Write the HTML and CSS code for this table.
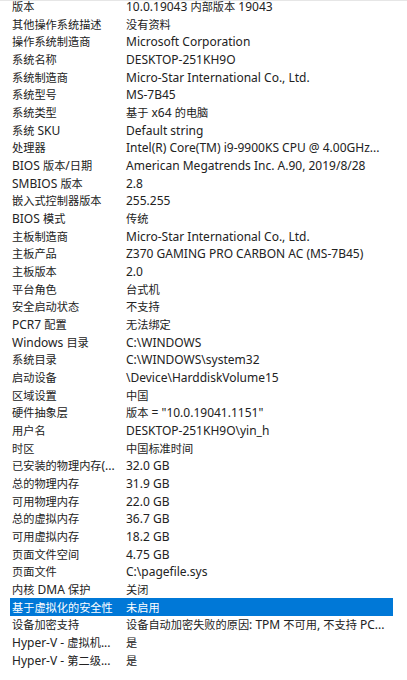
FILE: index.html
```html
<!DOCTYPE html>
<html lang="zh-CN">
<head>
<meta charset="utf-8">
<link rel="stylesheet" href="styles.css">
</head>
<body>
<div class="list">
  <div class="row"><span class="k"><span class="zh">版本</span></span><span class="v">10.0.19043 <span class="zh">内部版本</span> 19043</span></div>
  <div class="row"><span class="k"><span class="zh">其他操作系统描述</span></span><span class="v"><span class="zh">没有资料</span></span></div>
  <div class="row"><span class="k"><span class="zh">操作系统制造商</span></span><span class="v">Microsoft Corporation</span></div>
  <div class="row"><span class="k"><span class="zh">系统名称</span></span><span class="v">DESKTOP-251KH9O</span></div>
  <div class="row"><span class="k"><span class="zh">系统制造商</span></span><span class="v">Micro-Star International Co., Ltd.</span></div>
  <div class="row"><span class="k"><span class="zh">系统型号</span></span><span class="v">MS-7B45</span></div>
  <div class="row"><span class="k"><span class="zh">系统类型</span></span><span class="v"><span class="zh">基于</span> x64 <span class="zh">的电脑</span></span></div>
  <div class="row"><span class="k"><span class="zh">系统</span> SKU</span><span class="v">Default string</span></div>
  <div class="row"><span class="k"><span class="zh">处理器</span></span><span class="v">Intel(R) Core(TM) i9-9900KS CPU @ 4.00GHz...</span></div>
  <div class="row"><span class="k">BIOS <span class="zh">版本</span>/<span class="zh">日期</span></span><span class="v">American Megatrends Inc. A.90, 2019/8/28</span></div>
  <div class="row"><span class="k">SMBIOS <span class="zh">版本</span></span><span class="v">2.8</span></div>
  <div class="row"><span class="k"><span class="zh">嵌入式控制器版本</span></span><span class="v">255.255</span></div>
  <div class="row"><span class="k">BIOS <span class="zh">模式</span></span><span class="v"><span class="zh">传统</span></span></div>
  <div class="row"><span class="k"><span class="zh">主板制造商</span></span><span class="v">Micro-Star International Co., Ltd.</span></div>
  <div class="row"><span class="k"><span class="zh">主板产品</span></span><span class="v">Z370 GAMING PRO CARBON AC (MS-7B45)</span></div>
  <div class="row"><span class="k"><span class="zh">主板版本</span></span><span class="v">2.0</span></div>
  <div class="row"><span class="k"><span class="zh">平台角色</span></span><span class="v"><span class="zh">台式机</span></span></div>
  <div class="row"><span class="k"><span class="zh">安全启动状态</span></span><span class="v"><span class="zh">不支持</span></span></div>
  <div class="row"><span class="k">PCR7 <span class="zh">配置</span></span><span class="v"><span class="zh">无法绑定</span></span></div>
  <div class="row"><span class="k">Windows <span class="zh">目录</span></span><span class="v">C:\WINDOWS</span></div>
  <div class="row"><span class="k"><span class="zh">系统目录</span></span><span class="v">C:\WINDOWS\system32</span></div>
  <div class="row"><span class="k"><span class="zh">启动设备</span></span><span class="v">\Device\HarddiskVolume15</span></div>
  <div class="row"><span class="k"><span class="zh">区域设置</span></span><span class="v"><span class="zh">中国</span></span></div>
  <div class="row"><span class="k"><span class="zh">硬件抽象层</span></span><span class="v"><span class="zh">版本</span> = "10.0.19041.1151"</span></div>
  <div class="row"><span class="k"><span class="zh">用户名</span></span><span class="v">DESKTOP-251KH9O\yin_h</span></div>
  <div class="row"><span class="k"><span class="zh">时区</span></span><span class="v"><span class="zh">中国标准时间</span></span></div>
  <div class="row"><span class="k"><span class="zh">已安装的物理内存</span>(...</span><span class="v">32.0 GB</span></div>
  <div class="row"><span class="k"><span class="zh">总的物理内存</span></span><span class="v">31.9 GB</span></div>
  <div class="row"><span class="k"><span class="zh">可用物理内存</span></span><span class="v">22.0 GB</span></div>
  <div class="row"><span class="k"><span class="zh">总的虚拟内存</span></span><span class="v">36.7 GB</span></div>
  <div class="row"><span class="k"><span class="zh">可用虚拟内存</span></span><span class="v">18.2 GB</span></div>
  <div class="row"><span class="k"><span class="zh">页面文件空间</span></span><span class="v">4.75 GB</span></div>
  <div class="row"><span class="k"><span class="zh">页面文件</span></span><span class="v">C:\pagefile.sys</span></div>
  <div class="row"><span class="k"><span class="zh">内核</span> DMA <span class="zh">保护</span></span><span class="v"><span class="zh">关闭</span></span></div>
  <div class="row selected"><span class="k"><span class="zh">基于虚拟化的安全性</span></span><span class="v"><span class="zh">未启用</span></span></div>
  <div class="row"><span class="k"><span class="zh">设备加密支持</span></span><span class="v"><span class="zh">设备自动加密失败的原因</span>: TPM <span class="zh">不可用</span>, <span class="zh">不支持</span> PC...</span></div>
  <div class="row"><span class="k">Hyper-V - <span class="zh">虚拟机</span>...</span><span class="v"><span class="zh">是</span></span></div>
  <div class="row"><span class="k">Hyper-V - <span class="zh">第二级</span>...</span><span class="v"><span class="zh">是</span></span></div>
</div>
</body>
</html>
```
FILE: styles.css
```css
html, body {
  margin: 0;
  padding: 0;
  background: #ffffff;
}
body {
  font-family: "Noto Sans", "Noto Sans CJK SC", sans-serif;
  font-size: 12px;
  color: #222222;
  overflow: hidden;
  border-top: 1px solid #e6e6e6;
}
.list {
  display: flex;
  flex-direction: column;
  margin-top: -3.5px;
  padding-left: 10px;
  width: 383px;
}
.row {
  display: flex;
  align-items: center;
  height: 17.68px;
  line-height: 17px;
  white-space: nowrap;
}
.k {
  width: 114px;
  padding-left: 2px;
  flex: none;
}
.v {
  flex: 1;
}
.zh {
  font-family: "Noto Sans CJK SC", sans-serif;
  font-size: 11.2px;
}
.selected {
  background: #0078d7;
  color: #ffffff;
}
```
